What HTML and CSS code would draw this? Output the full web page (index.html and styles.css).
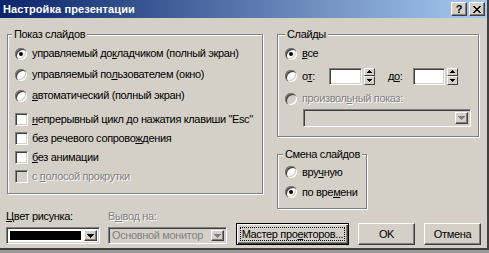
FILE: index.html
```html
<!DOCTYPE html>
<html lang="ru">
<head>
<meta charset="utf-8">
<title>Настройка презентации</title>
<link rel="stylesheet" href="styles.css">
</head>
<body>
<div class="window">
  <div class="titlebar">
    <span class="title">Настройка презентации</span>
    <div class="tbtns">
      <span class="tbtn help">?</span>
      <span class="tbtn close"><svg width="8" height="7" viewBox="0 0 8 7"><path d="M0 0h2v1H0zM6 0h2v1H6zM1 1h2v1H1zM5 1h2v1H5zM2 2h4v1H2zM3 3h2v1H3zM2 4h4v1H2zM1 5h2v1H1zM5 5h2v1H5zM0 6h2v1H0zM6 6h2v1H6z" fill="#000"/></svg></span>
    </div>
  </div>
  <div class="body">
    <div class="main">
      <fieldset class="group show">
        <legend>Показ слайдов</legend>
        <div class="row r21"><span class="radio on"></span><span>управляемый до<u>к</u>ладчиком (полный экран)</span></div>
        <div class="row r21"><span class="radio"></span><span>управляемый по<u>л</u>ьзователем (окно)</span></div>
        <div class="row r21"><span class="radio"></span><span><u>а</u>втоматический (полный экран)</span></div>
        <div class="checks">
          <div class="row r19"><span class="check"></span><span><u>н</u>епрерывный цикл до нажатия клавиши "Esc"</span></div>
          <div class="row r19"><span class="check"></span><span>без речевого сопрово<u>ж</u>дения</span></div>
          <div class="row r19"><span class="check"></span><span><u>б</u>ез анимации</span></div>
          <div class="row r19"><span class="check off"></span><span class="dis">с <u>п</u>олосой прокрутки</span></div>
        </div>
      </fieldset>
      <div class="rightcol">
        <fieldset class="group slides">
          <legend>Слайды</legend>
          <div class="row r21"><span class="radio on"></span><span><u>в</u>се</span></div>
          <div class="row r24">
            <span class="radio"></span><span class="lbl-from">о<u>т</u>:</span>
            <span class="field from"></span>
            <span class="spin"><span class="sb"><svg width="5" height="3" viewBox="0 0 5 3"><path d="M2 0h1v1H2zM1 1h3v1H1zM0 2h5v1H0z" fill="#000"/></svg></span><span class="sb"><svg width="5" height="3" viewBox="0 0 5 3"><path d="M0 0h5v1H0zM1 1h3v1H1zM2 2h1v1H2z" fill="#000"/></svg></span></span>
            <span class="lbl-to">д<u>о</u>:</span>
            <span class="field to"></span>
            <span class="spin"><span class="sb"><svg width="5" height="3" viewBox="0 0 5 3"><path d="M2 0h1v1H2zM1 1h3v1H1zM0 2h5v1H0z" fill="#000"/></svg></span><span class="sb"><svg width="5" height="3" viewBox="0 0 5 3"><path d="M0 0h5v1H0zM1 1h3v1H1zM2 2h1v1H2z" fill="#000"/></svg></span></span>
          </div>
          <div class="row r21"><span class="radio off"></span><span class="dis">произвол<u>ь</u>ный показ:</span></div>
          <div class="combo custom disabled">
            <span class="combo-text"></span>
            <span class="arrow"><svg width="7" height="4" viewBox="0 0 7 4"><path d="M0 0h7v1H0zM1 1h5v1H1zM2 2h3v1H2zM3 3h1v1H3z" fill="#808080"/></svg></span>
          </div>
        </fieldset>
        <fieldset class="group advance">
          <legend>Смена слайдов</legend>
          <div class="row r20"><span class="radio"></span><span>вру<u>ч</u>ную</span></div>
          <div class="row r20"><span class="radio on"></span><span>по вре<u>м</u>ени</span></div>
        </fieldset>
      </div>
    </div>
    <div class="bottom">
      <div class="col color-col">
        <span class="lbl"><u>Ц</u>вет рисунка:</span>
        <div class="combo color">
          <span class="swatch"></span>
          <span class="arrow"><svg width="7" height="4" viewBox="0 0 7 4"><path d="M0 0h7v1H0zM1 1h5v1H1zM2 2h3v1H2zM3 3h1v1H3z" fill="#000"/></svg></span>
        </div>
      </div>
      <div class="col out-col">
        <span class="lbl dis">В<u>ы</u>вод на:</span>
        <div class="combo disabled">
          <span class="combo-text">Основной монитор</span>
          <span class="arrow"><svg width="7" height="4" viewBox="0 0 7 4"><path d="M0 0h7v1H0zM1 1h5v1H1zM2 2h3v1H2zM3 3h1v1H3z" fill="#808080"/></svg></span>
        </div>
      </div>
      <button class="btn def wizard"><span class="focus">Мастер про<u>е</u>кторов...</span></button>
      <button class="btn ok">OK</button>
      <button class="btn cancel">Отмена</button>
    </div>
  </div>
</div>
</body>
</html>
```
FILE: styles.css
```css
* { box-sizing: border-box; }
html, body { margin: 0; padding: 0; }
body {
  width: 489px;
  height: 253px;
  overflow: hidden;
  background: #9a9a9a;
  font-family: "Liberation Sans", Arial, sans-serif;
  font-size: 11px;
  line-height: 13px;
  letter-spacing: -0.35px;
  color: #000;
}
u { text-underline-offset: 1px; }

.window {
  width: 489px;
  height: 250px;
  background: #d4d0c8;
  border-right: 2px solid #404040;
  border-bottom: 2px solid #404040;
  display: flex;
  flex-direction: column;
}

.titlebar {
  height: 18px;
  flex: none;
  background: linear-gradient(to right, #0a246a, #a6caf0);
  display: flex;
  align-items: center;
  justify-content: space-between;
  padding: 0 2px 0 3px;
}
.title { color: #fff; font-weight: bold; font-size: 11px; letter-spacing: 0.1px; }
.tbtns { display: flex; gap: 2px; }
.tbtn {
  width: 16px;
  height: 14px;
  background: #d4d0c8;
  border: 1px solid;
  border-color: #fff #404040 #404040 #fff;
  box-shadow: inset -1px -1px #808080;
  display: flex;
  align-items: center;
  justify-content: center;
  font-weight: bold;
  font-size: 11px;
  line-height: 12px;
  letter-spacing: 0;
}
.tbtn svg { display: block; }

.body {
  flex: 1;
  padding: 10px 0 0 7px;
  display: flex;
  flex-direction: column;
}
.main { display: flex; gap: 14px; align-items: flex-start; }

fieldset.group {
  margin: 0;
  min-width: 0;
  border: 1px solid #808080;
  box-shadow: inset 1px 1px #fff, 1px 1px #fff;
}
fieldset.group legend {
  padding: 0 2px;
  line-height: 13px;
  white-space: nowrap;
  background: #d4d0c8;
}
.show { width: 256px; padding: 2px 0 7px 7px; }
.show legend { margin-left: -3px; }
.checks { margin-top: 4px; }

.rightcol { width: 202px; display: flex; flex-direction: column; }
.slides { width: 202px; padding: 2px 0 9px 7px; }
.slides legend { margin-left: 0; }
.advance { width: 90px; margin-top: 11px !important; padding: 1px 0 6px 7px; }
.advance legend { margin-left: -2px; }

.row { display: flex; align-items: center; white-space: nowrap; }
.r19 { height: 19px; }
.r20 { height: 20px; }
.r21 { height: 21px; }
.r24 { height: 24px; }

.radio {
  flex: none;
  width: 12px;
  height: 12px;
  margin-right: 5px;
  border-radius: 50%;
  background: #fff;
  box-shadow: inset 1px 1px 0 #808080, inset 2px 2px 0 #404040, inset -1px -1px 0 #fff, inset -2px -2px 0 #d4d0c8;
  display: flex;
  align-items: center;
  justify-content: center;
}
.radio.on::after {
  content: "";
  width: 4px;
  height: 4px;
  border-radius: 50%;
  background: #000;
}
.radio.off { background: #d4d0c8; }

.check {
  flex: none;
  width: 13px;
  height: 13px;
  margin-right: 4px;
  background: #fff;
  border: 1px solid;
  border-color: #808080 #fff #fff #808080;
  box-shadow: inset 1px 1px #404040, inset -1px -1px #d4d0c8;
}
.check.off { background: #d4d0c8; }

.dis { color: #808080; text-shadow: 1px 1px 0 #fff; }

.lbl-from { width: 27px; flex: none; }
.lbl-to { width: 25px; flex: none; margin-left: 13px; }
.field {
  flex: none;
  height: 17px;
  background: #fff;
  border: 1px solid;
  border-color: #808080 #fff #fff #808080;
  box-shadow: inset 1px 1px #404040, inset -1px -1px #d4d0c8;
}
.field.from { width: 33px; }
.field.to { width: 32px; }
.spin {
  flex: none;
  width: 11px;
  height: 17px;
  margin-left: 2px;
  display: flex;
  flex-direction: column;
}
.sb {
  height: 8px;
  background: #d4d0c8;
  border: 1px solid;
  border-color: #fff #404040 #404040 #fff;
  display: flex;
  align-items: center;
  justify-content: center;
}
.sb + .sb { height: 9px; }
.sb svg { display: block; }

.combo {
  display: flex;
  align-items: stretch;
  border: 1px solid;
  border-color: #808080 #fff #fff #808080;
  box-shadow: inset 1px 1px #404040, inset -1px -1px #d4d0c8;
  padding: 2px;
  background: #fff;
}
.combo.disabled { background: #d4d0c8; }
.combo.custom { width: 168px; height: 18px; margin-left: 18px; }
.combo-text {
  flex: 1;
  color: #808080;
  line-height: 11px;
  padding-left: 1px;
  white-space: nowrap;
  overflow: hidden;
}
.arrow {
  flex: none;
  width: 13px;
  background: #d4d0c8;
  border: 1px solid;
  border-color: #fff #404040 #404040 #fff;
  box-shadow: inset -1px -1px #808080;
  display: flex;
  align-items: center;
  justify-content: center;
}
.arrow svg { display: block; }

.bottom {
  display: flex;
  align-items: flex-end;
  margin-left: -1px;
  height: 36px;
}
.col { display: flex; flex-direction: column; gap: 4px; margin-bottom: 1px; }
.lbl { white-space: nowrap; }
.color-col { width: 94px; }
.out-col { width: 119px; margin-left: 8px; }
.combo.color, .out-col .combo { height: 17px; }
.swatch { flex: 1; background: #000; margin: 1px 3px 1px 1px; }

.btn {
  height: 22px;
  padding: 0;
  font: inherit;
  letter-spacing: inherit;
  color: #000;
  background: #d4d0c8;
  border: 1px solid;
  border-color: #fff #404040 #404040 #fff;
  box-shadow: inset -1px -1px #808080;
  display: flex;
  align-items: center;
  justify-content: center;
  white-space: nowrap;
}
.btn.def {
  border: 1px solid #000;
  box-shadow: inset 1px 1px #fff, inset -1px -1px #404040, inset -2px -2px #808080;
  padding: 3px;
  align-items: stretch;
}
.focus {
  flex: 1;
  border: 1px dotted #000;
  display: flex;
  align-items: center;
  justify-content: center;
}
.wizard { width: 113px; margin-left: 9px; }
.ok { width: 57px; margin-left: 9px; }
.cancel { width: 57px; margin-left: 9px; }
```
